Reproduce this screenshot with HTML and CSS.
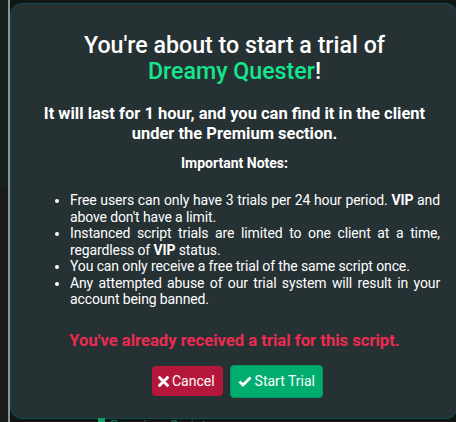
FILE: index.html
```html
<!DOCTYPE html>
<html lang="en">
<head>
  <meta charset="UTF-8">
  <title>Start Trial</title>
  <link rel="stylesheet" href="styles.css">
</head>
<body>

<div class="backdrop">
  <div class="side">
    <div class="side-top"></div>
    <div class="side-bottom"></div>
  </div>
  <div class="rail"></div>

  <div class="stage">
    <div class="modal">
      <h3 class="title">You're about to start a trial of<br><span class="script-name">Dreamy Quester</span>!</h3>
      <h4 class="lead">It will last for 1 hour, and you can find it in the client under the Premium section.</h4>

      <p class="notes-head">Important Notes:</p>
      <ul class="notes">
        <li>Free users can only have 3 trials per 24 hour period. <strong>VIP</strong> and above don't have a limit.</li>
        <li>Instanced script trials are limited to one client at a time, regardless of <strong>VIP</strong> status.</li>
        <li>You can only receive a free trial of the same script once.</li>
        <li>Any attempted abuse of our trial system will result in your account being banned.</li>
      </ul>

      <p class="warning">You've already received a trial for this script.</p>

      <div class="actions">
        <button class="btn btn-cancel">
          <svg width="11" height="11" viewBox="0 0 10 10"><path d="M1.5 1.5 8.5 8.5M8.5 1.5 1.5 8.5" stroke="#fff" stroke-width="2.6" stroke-linecap="square"/></svg>
          Cancel
        </button>
        <button class="btn btn-start">
          <svg width="14" height="11" viewBox="0 0 14 11"><path d="M1.5 5.5 5 9 12.5 1.5" fill="none" stroke="#fff" stroke-width="2.8"/></svg>
          Start Trial
        </button>
      </div>
    </div>
    <div class="peek"><span class="peek-icon"></span>Premium Scripts</div>
  </div>
</div>

</body>
</html>
```

FILE: styles.css
```css
html, body {
  margin: 0;
  padding: 0;
  width: 456px;
  height: 422px;
  overflow: hidden;
  background-color: #111615;
}
body {
  font-family: Roboto, "Noto Sans", sans-serif;
  color: #fff;
}
.backdrop {
  display: flex;
  height: 422px;
}
.side {
  width: 8px;
  flex-shrink: 0;
  display: flex;
  flex-direction: column;
}
.side-top {
  height: 186px;
  background: #172120;
}
.side-bottom {
  flex: 1;
  background: #1b1b1b;
}
.rail {
  width: 2px;
  flex-shrink: 0;
  background: #8e9392;
}
.stage {
  width: 460px;
  flex-shrink: 0;
  padding-top: 3px;
}
.modal {
  box-sizing: border-box;
  width: 448px;
  height: 416px;
  background: #263134;
  border: 1px solid #0d4d57;
  border-radius: 12px;
  padding: 28px 17px 0 18px;
  text-align: center;
}
.title {
  font-size: 23.2px;
  font-weight: 500;
  line-height: 26px;
  margin: 0;
}
.script-name {
  color: #14e68c;
}
.lead {
  font-size: 16.5px;
  font-weight: 700;
  line-height: 20px;
  margin: 20px 0 0;
}
.notes-head {
  font-size: 14px;
  font-weight: 700;
  margin: 11px 0 0;
}
.notes {
  text-align: justify;
  font-size: 14px;
  line-height: 16.5px;
  letter-spacing: -0.12px;
  margin: 21px 0 0;
  padding-left: 41px;
}
.notes strong {
  font-weight: 700;
}
.warning {
  color: #ec2b50;
  font-weight: 700;
  font-size: 16.6px;
  margin: 23px 0 0;
}
.actions {
  display: flex;
  justify-content: center;
  align-items: center;
  gap: 7px;
  margin-top: 15px;
  padding-left: 6px;
}
.btn {
  font-family: Roboto, sans-serif;
  font-size: 14px;
  color: #fff;
  border: none;
  border-radius: 4px;
  display: flex;
  align-items: center;
  gap: 3px;
}
.btn-cancel {
  background: #b5173b;
  height: 30px;
  padding: 0 8px 0 6px;
}
.btn-start {
  background: #00ad6e;
  border: 1px solid #009a61;
  height: 33px;
  padding: 0 7px 0 7px;
}
.peek {
  display: flex;
  align-items: flex-start;
  gap: 5px;
  color: #0e7a52;
  font-size: 14px;
  padding-left: 88px;
  margin-top: -1px;
}
.peek-icon {
  width: 7px;
  height: 6px;
  background: #12a06a;
}
```
